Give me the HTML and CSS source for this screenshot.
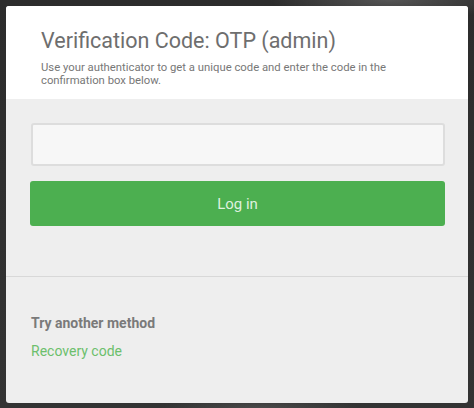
FILE: index.html
```html
<!DOCTYPE html>
<html lang="en">
<head>
<meta charset="utf-8">
<title>Verification Code: OTP</title>
<link rel="stylesheet" href="styles.css">
</head>
<body>
<div class="card">
  <header class="card-head">
    <h1 class="title">Verification Code: OTP (admin)</h1>
    <p class="desc">Use your authenticator to get a unique code and enter the code in the confirmation box below.</p>
  </header>
  <form class="card-form" onsubmit="return false">
    <input class="code-input" type="text" aria-label="Verification code">
    <button class="login-btn" type="submit">Log in</button>
  </form>
  <hr class="sep">
  <div class="alt">
    <div class="alt-title">Try another method</div>
    <a class="alt-link" href="#">Recovery code</a>
  </div>
</div>
</body>
</html>
```

FILE: styles.css
```css
html, body {
  margin: 0;
  padding: 0;
}
body {
  width: 474px;
  height: 408px;
  overflow: hidden;
  font-family: Roboto, "Liberation Sans", sans-serif;
  background:
    radial-gradient(ellipse 120px 20px at 390px 0px, #555 0%, rgba(85,85,85,0) 100%),
    radial-gradient(ellipse 100px 10px at 260px 408px, #4a4a4a 0%, rgba(74,74,74,0) 100%),
    linear-gradient(180deg, #2c2c2c, #333);
  padding: 6px;
  box-sizing: border-box;
}
.card {
  width: 462px;
  height: 397px;
  background: #eeeeee;
  border-radius: 3px;
  overflow: hidden;
  display: flex;
  flex-direction: column;
}
.card-head {
  background: #ffffff;
  height: 93px;
  box-sizing: border-box;
  padding: 23px 30px 0 35px;
}
.title {
  margin: 0;
  font-size: 21.5px;
  line-height: 24px;
  font-weight: 400;
  color: #6e6e6e;
}
.desc {
  margin: 8px 0 0 0;
  font-size: 11.3px;
  line-height: 13px;
  color: #777777;
}
.card-form {
  display: flex;
  flex-direction: column;
  gap: 15px;
  padding: 24px 23px 0 24px;
}
.code-input {
  height: 43px;
  box-sizing: border-box;
  border: 2px solid #dddddd;
  border-radius: 3px;
  background: #f7f7f7;
  margin: 0 0 0 1px;
  padding: 0 10px;
  font: inherit;
}
.login-btn {
  height: 45px;
  border: none;
  border-radius: 3px;
  background: #4caf50;
  color: #dff1df;
  font-family: inherit;
  font-size: 15px;
  padding: 0;
}
.sep {
  margin: 50px 0 0 0;
  border: none;
  border-top: 1px solid #d8d8d8;
  height: 0;
}
.alt {
  display: flex;
  flex-direction: column;
  align-items: flex-start;
  padding: 36px 25px 0 25px;
  gap: 8px;
}
.alt-title {
  font-size: 14px;
  line-height: 20px;
  font-weight: 700;
  color: #7a7a7a;
}
.alt-link {
  font-size: 14px;
  line-height: 20px;
  color: #6cbf6c;
  text-decoration: none;
}
```
